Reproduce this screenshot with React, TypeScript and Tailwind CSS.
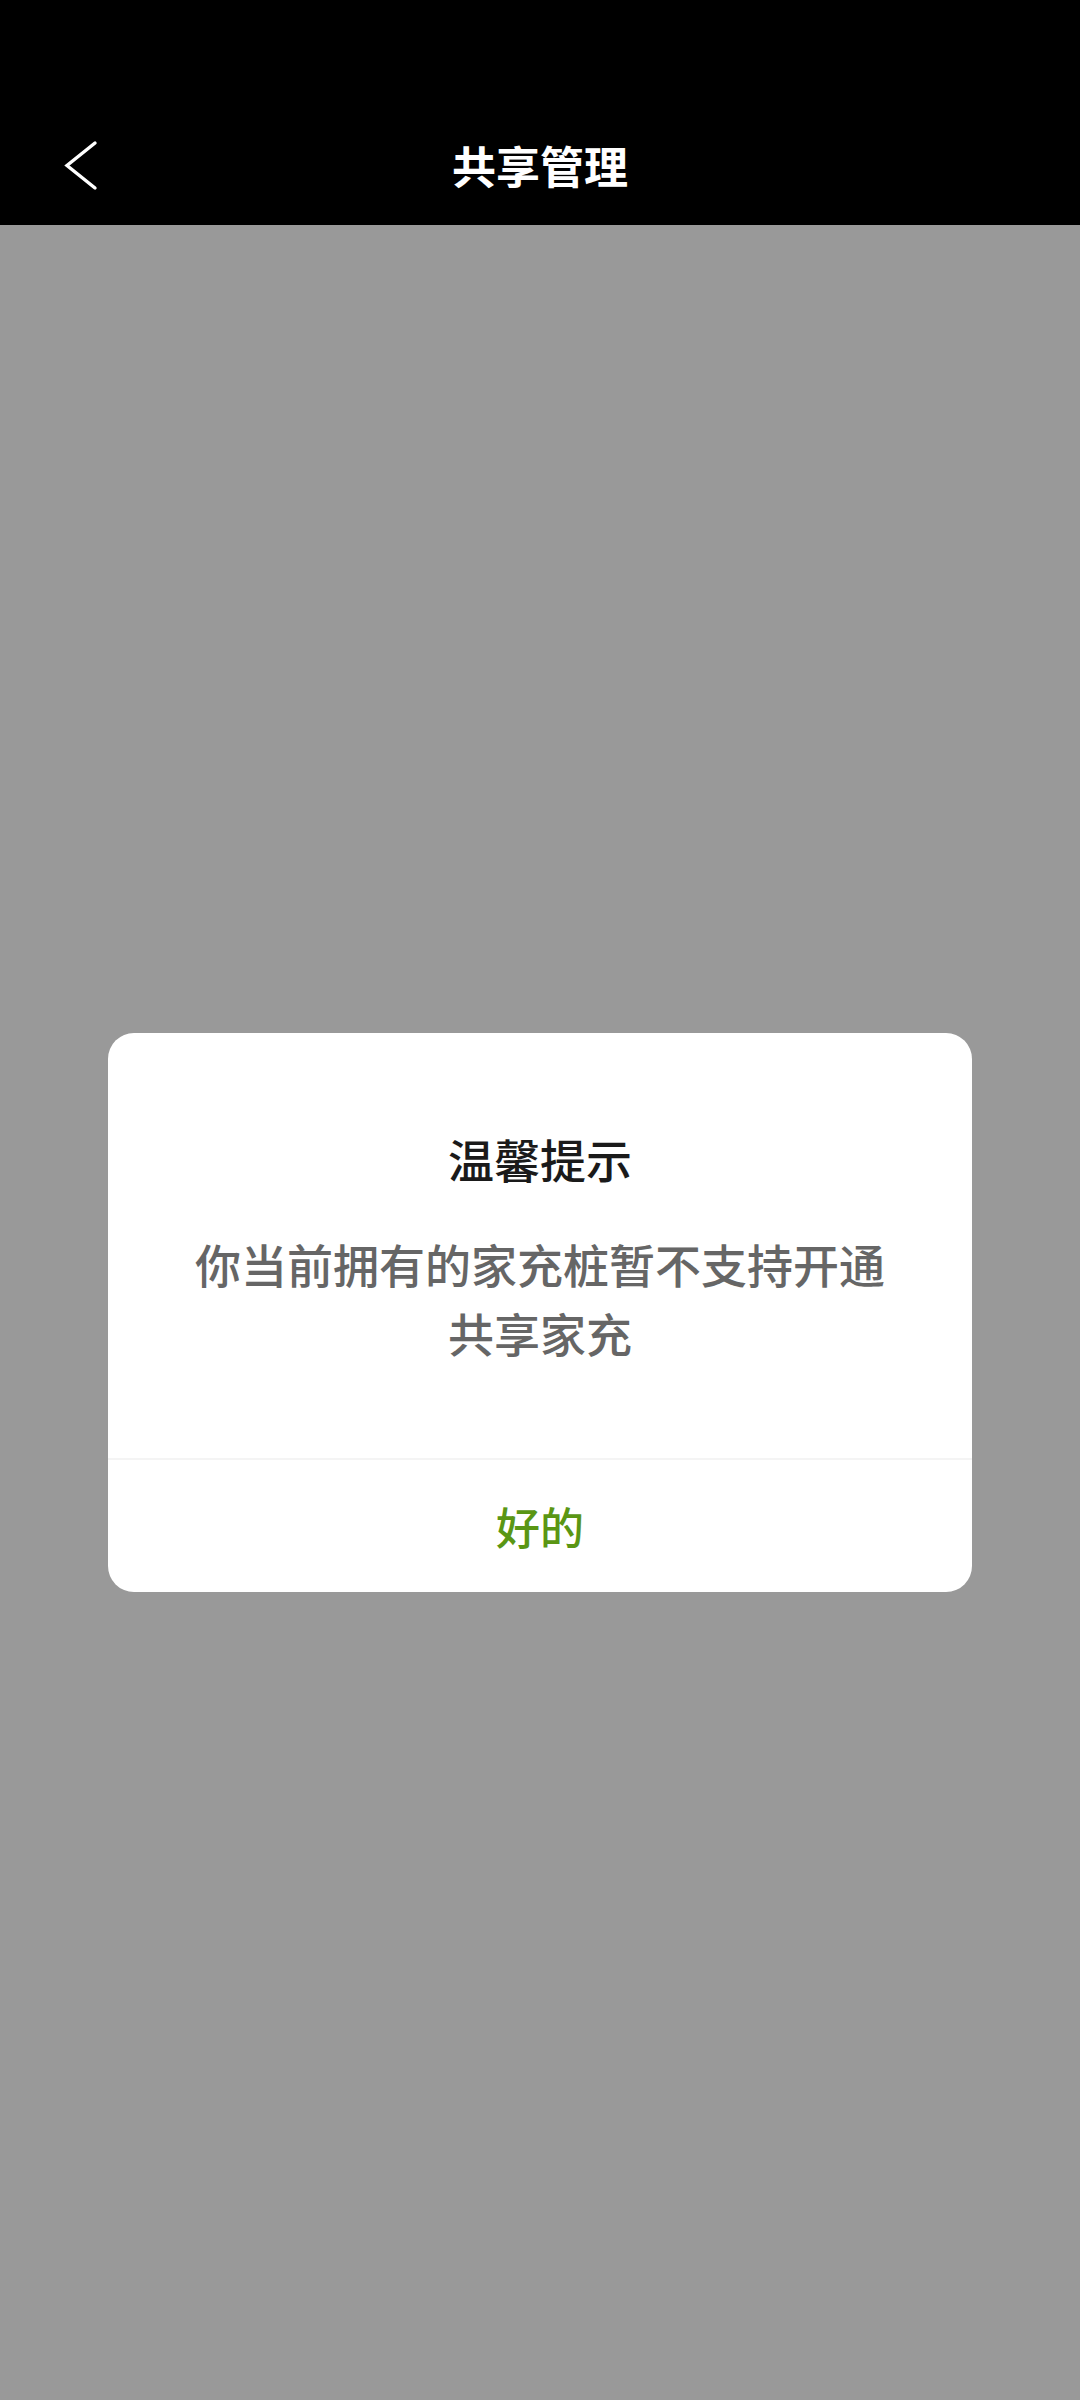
import React from "react";

export default function App() {
  const cjk = { fontFamily: '"Noto Sans CJK SC", "Noto Sans", sans-serif' };
  return (
    <div className="flex h-[2400px] w-[1080px] flex-col bg-[#999999]" style={cjk}>
      <div className="relative flex h-[225px] shrink-0 items-end bg-black pb-[28px]">
        <div className="flex h-[64px] w-full items-center justify-center">
          <span className="text-[44px] font-bold leading-[64px] text-white">共享管理</span>
        </div>
        <svg
          className="absolute left-[64px] top-[140px]"
          width="34"
          height="52"
          viewBox="0 0 34 52"
          fill="none"
        >
          <polyline
            points="31,3 3,25.5 31,48"
            stroke="white"
            strokeWidth="3.4"
            strokeLinecap="round"
            strokeLinejoin="miter"
          />
        </svg>
      </div>
      <div className="flex flex-1 items-center justify-center">
        <div className="flex w-[864px] flex-col overflow-hidden rounded-[26px] bg-white">
          <div className="flex flex-col items-center px-[78px] pb-[91px] pt-[93px]">
            <div className="text-[46px] font-medium leading-[64px] text-[#1a1a1a]">温馨提示</div>
            <div className="mt-[39px] text-center text-[46px] font-medium leading-[69px] text-[#666666]">
              你当前拥有的家充桩暂不支持开通共享家充
            </div>
          </div>
          <div className="h-[2px] bg-[#f4f4f4]" />
          <div className="flex h-[132px] items-center justify-center">
            <span className="text-[44px] font-medium leading-[60px] text-[#5a9614]">好的</span>
          </div>
        </div>
      </div>
    </div>
  );
}
